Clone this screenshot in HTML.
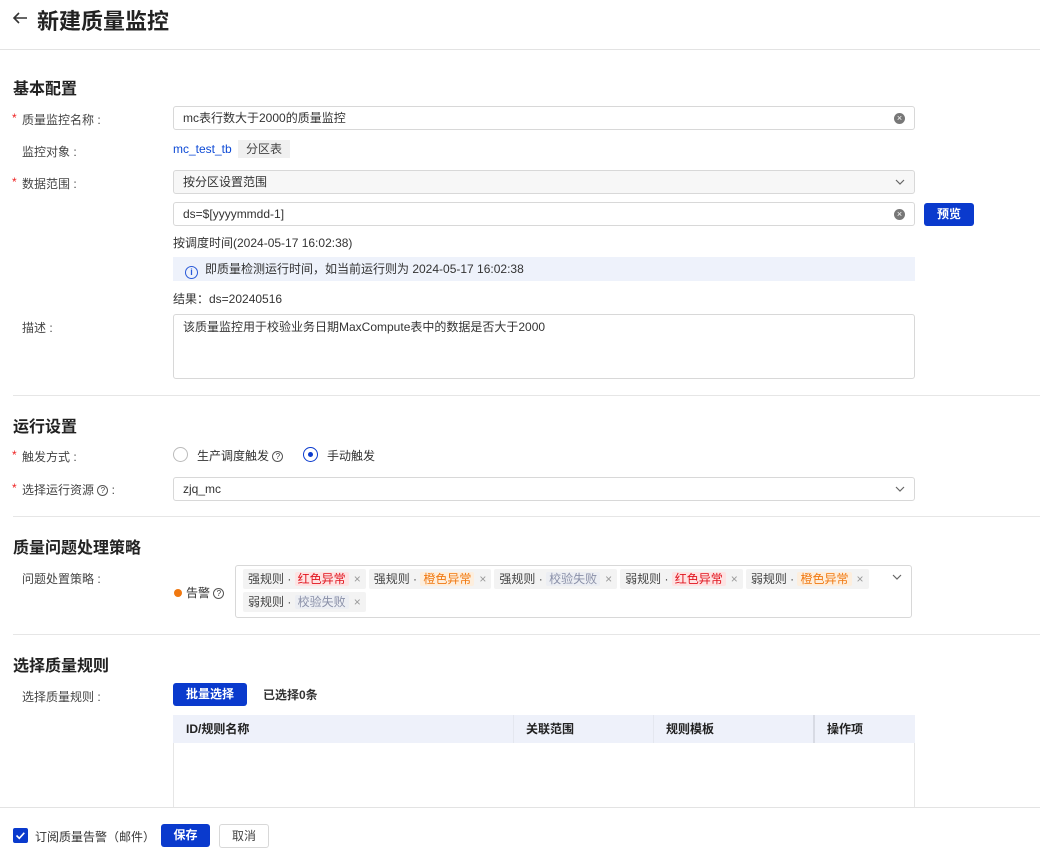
<!DOCTYPE html>
<html><head><meta charset="utf-8"><style>
*{box-sizing:border-box;margin:0;padding:0}
body{width:1040px;height:853px;overflow:hidden;background:#fff;font-family:"Liberation Sans","Noto Sans CJK SC",sans-serif;font-size:12px;color:#333;position:relative}
.a{position:absolute}
.h{font-size:16px;font-weight:bold;color:#222}
.lbl{left:22px;color:#444}
.star{position:absolute;left:-10px;color:#e22}
.inp{position:absolute;left:173px;width:742px;height:24px;border:1px solid #d8d8d8;border-radius:3px;padding:0 9px;line-height:22px;color:#333}
.clr{position:absolute;right:9px;top:6px;width:11px;height:11px;border-radius:50%;background:#777;color:#fff;font-size:9px;line-height:11px;text-align:center}
.caret{position:absolute;right:9px;top:7px;width:10px;height:8px}
.div{position:absolute;left:13px;right:0;height:1px;background:#e6e6e6}
.tag{display:inline-block;height:20px;line-height:20px;background:#f3f3f3;padding:0 5px;margin:0 3px 3px 0;color:#444;border-radius:2px;white-space:nowrap}
.tag i{font-style:normal;padding:0 3px;border-radius:2px}
.r{background:#fde3e3;color:#e0131d}.o{background:#fdeedd;color:#f07810}.g{background:#eceef3;color:#8a90a8}
.tag b{font-weight:normal;color:#999;margin-left:5px}
.btn{position:absolute;height:23px;border-radius:3px;background:#0a3acd;color:#fff;text-align:center;line-height:23px;font-weight:bold}
.q{display:inline-block;width:11px;height:11px;border:1px solid #555;border-radius:50%;font-size:8px;line-height:9px;text-align:center;vertical-align:1px}
</style></head><body>
<svg class="a" style="left:12px;top:11px" width="16" height="14" viewBox="0 0 16 14"><path d="M15 7H2M7 2L2 7l5 5" fill="none" stroke="#333" stroke-width="1.6"/></svg>
<div class="a" style="left:37px;top:4px;font-size:22px;font-weight:bold;color:#222">新建质量监控</div>
<div class="a" style="left:0;right:0;top:49px;height:1px;background:#e3e3e3"></div>

<div class="a h" style="left:13px;top:75px">基本配置</div>
<div class="a lbl" style="top:111px"><span class="star">*</span>质量监控名称 :</div>
<div class="inp" style="top:106px">mc表行数大于2000的质量监控<span class="clr">×</span></div>
<div class="a lbl" style="top:143px">监控对象 :</div>
<div class="a" style="left:173px;top:142px;color:#0d4ad6">mc_test_tb</div>
<div class="a" style="left:238px;top:140px;background:#f0f0f0;padding:0 8px;height:18px;line-height:18px;color:#444">分区表</div>
<div class="a lbl" style="top:175px"><span class="star">*</span>数据范围 :</div>
<div class="inp" style="top:170px;background:#f7f7f7">按分区设置范围<svg class="caret" viewBox="0 0 10 8"><path d="M1 2l4 4 4-4" fill="none" stroke="#666" stroke-width="1.2"/></svg></div>
<div class="inp" style="top:202px">ds=$[yyyymmdd-1]<span class="clr">×</span></div>
<div class="btn" style="left:924px;top:203px;width:50px">预览</div>
<div class="a" style="left:173px;top:234px">按调度时间(2024-05-17 16:02:38)</div>
<div class="a" style="left:173px;top:257px;width:742px;height:24px;background:#eef2fb;line-height:24px;padding-left:12px;color:#333"><span style="display:inline-block;width:13px;height:13px;border:1.3px solid #2a5ad8;border-radius:50%;color:#2a5ad8;font-size:9px;line-height:11px;text-align:center;font-weight:bold;vertical-align:-2px;margin-right:7px">i</span>即质量检测运行时间，如当前运行则为 2024-05-17 16:02:38</div>
<div class="a" style="left:173px;top:290px">结果：ds=20240516</div>
<div class="a lbl" style="top:319px">描述 :</div>
<div class="inp" style="top:314px;height:65px;line-height:20px;padding-top:2px">该质量监控用于校验业务日期MaxCompute表中的数据是否大于2000</div>
<div class="div" style="top:395px"></div>

<div class="a h" style="left:13px;top:413px">运行设置</div>
<div class="a lbl" style="top:448px"><span class="star">*</span>触发方式 :</div>
<div class="a" style="left:173px;top:447px;width:15px;height:15px;border:1px solid #bbb;border-radius:50%"></div>
<div class="a" style="left:197px;top:447px">生产调度触发 <span class="q">?</span></div>
<div class="a" style="left:303px;top:447px;width:15px;height:15px;border:1px solid #0a3acd;border-radius:50%"><div style="margin:4px;width:5px;height:5px;border-radius:50%;background:#0a3acd"></div></div>
<div class="a" style="left:327px;top:447px">手动触发</div>
<div class="a lbl" style="top:481px"><span class="star">*</span>选择运行资源 <span class="q">?</span> :</div>
<div class="inp" style="top:477px">zjq_mc<svg class="caret" viewBox="0 0 10 8"><path d="M1 2l4 4 4-4" fill="none" stroke="#666" stroke-width="1.2"/></svg></div>
<div class="div" style="top:516px"></div>

<div class="a h" style="left:13px;top:534px">质量问题处理策略</div>
<div class="a lbl" style="top:570px">问题处置策略 :</div>
<div class="a" style="left:174px;top:584px"><span style="display:inline-block;width:8px;height:8px;border-radius:50%;background:#f07810;margin-right:4px"></span>告警 <span class="q">?</span></div>
<div class="a" style="left:235px;top:565px;width:677px;height:53px;border:1px solid #d8d8d8;border-radius:3px;padding:3px 30px 0 7px;line-height:0">
<span class="tag">强规则 · <i class="r">红色异常</i><b>×</b></span><span class="tag">强规则 · <i class="o">橙色异常</i><b>×</b></span><span class="tag">强规则 · <i class="g">校验失败</i><b>×</b></span><span class="tag">弱规则 · <i class="r">红色异常</i><b>×</b></span><span class="tag">弱规则 · <i class="o">橙色异常</i><b>×</b></span><span class="tag">弱规则 · <i class="g">校验失败</i><b>×</b></span>
<svg class="caret" style="right:9px;top:7px" viewBox="0 0 10 8"><path d="M1 2l4 4 4-4" fill="none" stroke="#666" stroke-width="1.2"/></svg></div>
<div class="div" style="top:634px"></div>

<div class="a h" style="left:13px;top:652px">选择质量规则</div>
<div class="a lbl" style="top:688px">选择质量规则 :</div>
<div class="btn" style="left:173px;top:683px;width:74px">批量选择</div>
<div class="a" style="left:263px;top:686px;font-weight:bold;color:#333">已选择0条</div>
<div class="a" style="left:173px;top:715px;width:742px;height:100px;border:1px solid #e6e6e6"></div>
<div class="a" style="left:173px;top:715px;width:742px;height:28px;background:#eef1fa;font-weight:bold;line-height:28px;color:#222">
<span class="a" style="left:13px">ID/规则名称</span>
<span class="a" style="left:340px;top:0;height:28px;border-left:1px solid #e4e7ef;padding-left:12px">关联范围</span>
<span class="a" style="left:480px;top:0;height:28px;border-left:1px solid #e4e7ef;padding-left:12px">规则模板</span>
<span class="a" style="left:640px;top:0;height:28px;border-left:2px solid #d8dbe4;padding-left:12px;width:102px">操作项</span></div>

<div class="a" style="left:0;top:807px;width:1040px;height:46px;background:#fff;border-top:1px solid #e3e3e3"></div>
<div class="a" style="left:13px;top:828px;width:15px;height:15px;background:#0a3acd;border-radius:2px"><svg width="15" height="15" viewBox="0 0 15 15"><path d="M3.5 7.5l2.8 2.8 5-5.5" fill="none" stroke="#fff" stroke-width="1.6"/></svg></div>
<div class="a" style="left:35px;top:828px">订阅质量告警（邮件）</div>
<div class="btn" style="left:161px;top:824px;width:49px">保存</div>
<div class="a" style="left:219px;top:824px;width:50px;height:24px;border:1px solid #d8d8d8;border-radius:3px;text-align:center;line-height:22px;color:#444">取消</div>
</body></html>
